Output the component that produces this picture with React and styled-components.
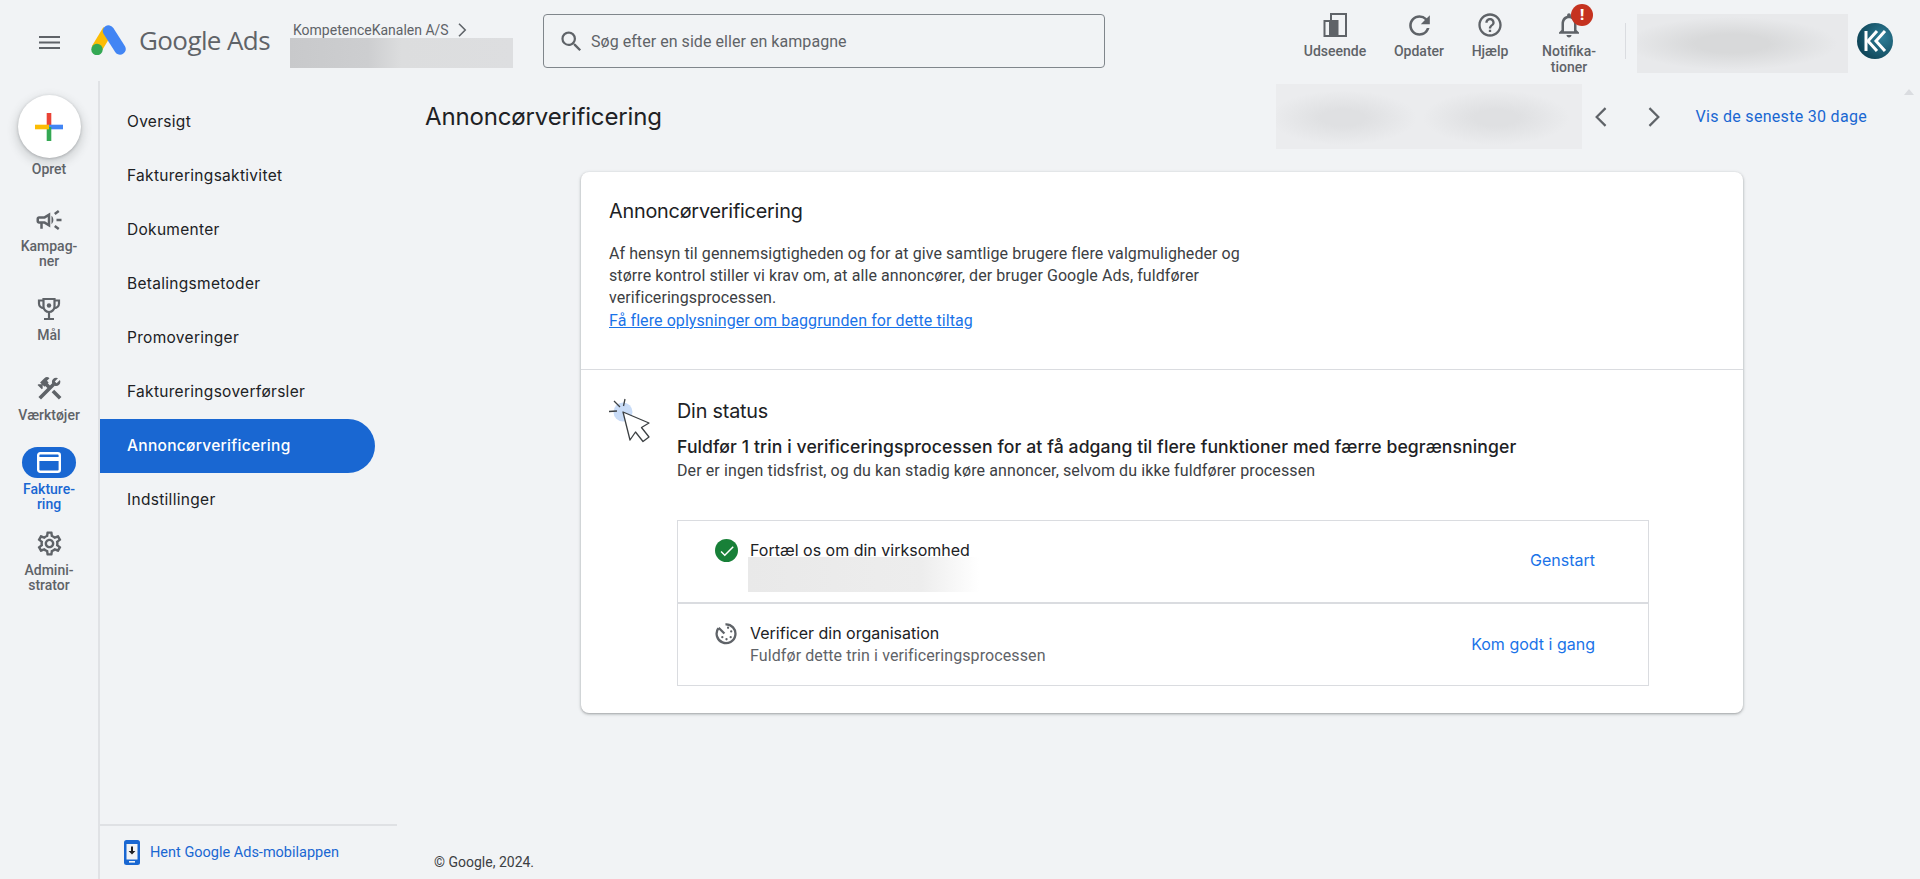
import React from 'react';
import styled, { createGlobalStyle } from 'styled-components';
import { MdRefresh, MdHelpOutline, MdOutlineNotifications, MdCheck, MdOutlineCampaign, MdConstruction, MdOutlineSettings, MdSearch } from 'react-icons/md';

const Global = createGlobalStyle`
  html, body { margin: 0; padding: 0; height: 100%; overflow: hidden; background: #f1f3f5; }
  body { font-family: Roboto, "Liberation Sans", sans-serif; color: #3c4043; }
  * { box-sizing: border-box; }
`;
const sans = `Inter, Roboto, sans-serif`;

const Page = styled.div`display:flex;flex-direction:column;width:1920px;height:879px;position:relative;overflow:hidden;`;
const Header = styled.header`display:flex;align-items:flex-start;height:81px;flex:none;`;
const Burger = styled.div`width:91px;height:81px;padding:34px 0 0 39px;flex:none;`;
const Brand = styled.div`display:flex;align-items:center;height:30px;margin-top:25px;gap:13px;flex:none;width:199px;`;
const BrandName = styled.span`font-family:"Open Sans",sans-serif;font-size:26px;color:#5f6368;letter-spacing:-0.6px;white-space:nowrap;line-height:30px;`;
const Account = styled.div`width:253px;flex:none;padding-top:21px;`;
const AccountName = styled.div`display:flex;align-items:center;height:18px;font-size:14px;color:#5f6368;padding-left:3px;gap:9px;white-space:nowrap;`;
const Blur = styled.div`flex:none;background:${p=>p.$bg};`;
const AccountBlur = styled(Blur)`width:223px;height:30px;margin-top:-1px;`;
const SearchBox = styled.div`width:562px;height:54px;margin-top:14px;flex:none;border:1px solid #80868b;border-radius:4px;display:flex;align-items:center;padding-left:14px;gap:6px;font-size:16px;letter-spacing:.05px;color:#5f6368;background:#f1f3f5;`;
const Tools = styled.div`display:flex;margin-left:auto;flex:none;`;
const Tool = styled.div`width:${p=>p.$w}px;flex:none;display:flex;flex-direction:column;align-items:center;padding-top:12px;font-size:14px;font-weight:500;color:#5f6368;line-height:16px;text-align:center;position:relative;`;
const ToolIcon = styled.div`height:26px;margin-bottom:5px;display:flex;align-items:center;justify-content:center;`;
const Badge = styled.span`position:absolute;left:48px;top:4px;width:22px;height:22px;border-radius:50%;background:#c5321f;color:#fff;font-size:15px;font-weight:900;line-height:22px;text-align:center;`;
const Divider = styled.div`width:1px;height:36px;background:#dadce0;margin:23px 11px 0 10px;flex:none;`;
const UserBlur = styled(Blur)`width:211px;height:59px;margin-top:14px;`;
const Avatar = styled.div`width:36px;height:36px;margin:23px 27px 0 9px;flex:none;border-radius:50%;background:radial-gradient(circle at 70% 40%, #2f7f99, #0f4558 75%);display:flex;align-items:center;justify-content:center;`;

const Body = styled.div`display:flex;flex:1;min-height:0;`;
const Rail = styled.nav`width:100px;flex:none;border-right:2px solid #e0e2e5;display:flex;flex-direction:column;align-items:center;`;
const CreateButton = styled.div`width:63px;height:63px;margin-top:14px;border-radius:50%;background:#fff;box-shadow:0 1px 3px rgba(60,64,67,.3),0 4px 8px 3px rgba(60,64,67,.15);display:flex;align-items:center;justify-content:center;flex:none;`;
const RailLabel = styled.div`font-size:14px;line-height:15px;font-weight:500;color:${p=>p.$active?'#1967d2':'#5f6368'};text-align:center;width:84px;`;
const CreateLabel = styled(RailLabel)`margin:4px 0 27px;`;
const RailItem = styled.div`height:${p=>p.$h}px;flex:none;display:flex;flex-direction:column;align-items:center;`;
const RailIcon = styled.div`width:54px;height:31px;display:flex;align-items:center;justify-content:center;margin-bottom:4px;color:#5f6368;border-radius:16px;background:${p=>p.$active?'#1967d2':'transparent'};`;

const SubNav = styled.nav`width:300px;flex:none;display:flex;flex-direction:column;`;
const SubList = styled.div`flex:1;padding-top:14px;`;
const SubItem = styled.div`width:275px;height:54px;padding:0 0 2px 27px;display:flex;align-items:center;font-family:${sans};font-size:15.5px;letter-spacing:.3px;font-weight:${p=>p.$active?500:400};color:${p=>p.$active?'#fff':'#202124'};background:${p=>p.$active?'#1967d2':'transparent'};border-radius:0 27px 27px 0;`;
const AppLink = styled.div`height:55px;margin-right:3px;border-top:2px solid #dfe1e4;display:flex;align-items:center;padding:0 0 0 24px;gap:10px;font-size:14.5px;color:#1967d2;`;

const Main = styled.main`flex:1;min-width:0;display:flex;flex-direction:column;position:relative;`;
const TitleBar = styled.div`height:65px;margin-top:3px;display:flex;align-items:center;padding-left:25px;flex:none;`;
const Title = styled.h1`margin:0;font-family:${sans};font-size:24px;font-weight:400;color:#202124;letter-spacing:-0.15px;`;
const DateBlur = styled(Blur)`width:306px;height:65px;margin-left:auto;`;
const NavArrow = styled.div`width:36px;display:flex;align-items:center;justify-content:center;flex:none;margin-left:${p=>p.$ml}px;`;
const RangeLink = styled.div`font-size:16px;letter-spacing:.3px;font-weight:400;color:#1967d2;margin:0 53px 0 22px;white-space:nowrap;`;
const ScrollUp = styled.div`position:absolute;right:6px;top:8px;width:0;height:0;border-left:5px solid transparent;border-right:5px solid transparent;border-bottom:6px solid #dadce0;`;

const Card = styled.section`width:1162px;margin:23px 0 0 181px;height:541px;flex:none;background:#fff;border-radius:8px;box-shadow:0 1px 2px rgba(60,64,67,.3),0 1px 3px 1px rgba(60,64,67,.15);display:flex;flex-direction:column;`;
const Intro = styled.div`height:198px;border-bottom:1px solid #dadce0;padding:26px 28px 0;flex:none;`;
const CardTitle = styled.h2`margin:0 0 19px;font-family:${sans};font-size:19.8px;line-height:26px;font-weight:400;color:#202124;letter-spacing:-0.2px;`;
const Para = styled.p`margin:0;font-size:16px;letter-spacing:.08px;line-height:22px;color:#3c4043;width:650px;`;
const LearnLink = styled.a`display:block;font-size:16px;letter-spacing:.08px;line-height:22px;margin-top:1px;color:#1a73e8;text-decoration:underline;`;
const Status = styled.div`display:flex;padding:27px 94px 0 28px;flex:1;`;
const StatusIcon = styled.div`width:68px;flex:none;margin-top:-1px;`;
const StatusBody = styled.div`flex:1;min-width:0;`;
const StatusTitle = styled.h3`margin:0;font-family:${sans};font-size:19.8px;line-height:28px;font-weight:400;color:#202124;letter-spacing:-0.2px;`;
const StatusLead = styled.div`font-family:${sans};font-size:17.6px;letter-spacing:.1px;line-height:24px;font-weight:500;color:#202124;margin-top:10px;white-space:nowrap;`;
const StatusNote = styled.div`font-size:16px;letter-spacing:.1px;line-height:22px;color:#3c4043;margin-top:1px;`;
const Steps = styled.div`margin-top:38px;border:1px solid #dadce0;`;
const Step = styled.div`height:${p=>p.$h}px;display:flex;padding:19px 53px 0 37px;${p=>p.$line?'border-bottom:2px solid #dadce0;':''}`;
const StepIcon = styled.div`width:35px;flex:none;margin-top:-1px;`;
const StepText = styled.div`flex:1;`;
const StepTitle = styled.div`font-family:${sans};font-size:16px;line-height:20px;font-weight:400;color:#202124;`;
const StepNote = styled.div`font-size:16px;letter-spacing:.1px;line-height:20px;color:#5f6368;margin-top:3px;`;
const StepBlur = styled(Blur)`width:231px;height:35px;margin:-3px 0 0 -2px;`;
const StepAction = styled.div`margin-top:${p=>p.$mt}px;line-height:20px;font-family:${sans};font-size:16px;font-weight:400;color:#1a73e8;white-space:nowrap;`;
const CheckDisc = styled.div`width:23px;height:23px;border-radius:50%;background:#188038;display:flex;align-items:center;justify-content:center;color:#fff;`;
const Copyright = styled.div`margin-top:auto;padding:0 0 8px 34px;font-size:14px;line-height:18px;color:#3c4043;`;

const blur1 = 'linear-gradient(90deg,#c8c9cb 0%,#cdced0 35%,#dcddde 50%,#dddee0 100%)';
const blur2 = 'radial-gradient(ellipse 50% 45% at 45% 50%,#d8d9da 35%,transparent),linear-gradient(#e8e9eb,#e8e9eb)';
const blur3 = 'radial-gradient(ellipse 24% 42% at 22% 52%,#dfe0e2 30%,transparent),radial-gradient(ellipse 24% 42% at 72% 52%,#dfe0e2 30%,transparent),linear-gradient(#ebecee,#ebecee)';
const blur4 = 'linear-gradient(90deg,#e9e9e9 0%,#ededed 75%,#fff 100%)';

const Logo = () => (
  <svg width="35" height="30" viewBox="0 0 35 30">
    <path d="M17 5 L5.5 24" stroke="#fbbc04" strokeWidth="11" strokeLinecap="butt" />
    <path d="M17.5 6 L29 24" stroke="#4285f4" strokeWidth="11.5" strokeLinecap="round" />
    <circle cx="6" cy="24.5" r="5.7" fill="#34a853" />
  </svg>
);
const Plus = () => (
  <svg width="28" height="28" viewBox="0 0 28 28">
    <rect x="11.7" y="0" width="4.6" height="14" fill="#ea4335" />
    <rect x="14" y="11.7" width="14" height="4.6" fill="#4285f4" />
    <rect x="11.7" y="14" width="4.6" height="14" fill="#34a853" />
    <rect x="0" y="11.7" width="14" height="4.6" fill="#fbbc04" />
  </svg>
);
const Appearance = () => (
  <svg width="24" height="24" viewBox="0 0 24 24">
    <rect x="8" y="1" width="15" height="22" fill="none" stroke="#5f6368" strokeWidth="2" />
    <rect x="1.5" y="8" width="13" height="15" fill="#f1f3f5" stroke="#5f6368" strokeWidth="2" />
    <rect x="6" y="9" width="9" height="14" fill="#5f6368" />
  </svg>
);
const Trophy = () => (
  <svg width="24" height="24" viewBox="0 0 24 24" fill="none" stroke="#5f6368" strokeWidth="2.2">
    <path d="M6.5 2H17.5V9.5A5.5 5.5 0 0 1 6.5 9.5Z" />
    <path d="M6.5 3.5H2V6.5C2 9 4 11 6.8 11.2M17.5 3.5H22V6.5C22 9 20 11 17.2 11.2" />
    <path d="M12 15V21M7 22H17" strokeWidth="2.2" />
    <circle cx="12" cy="8.5" r="2.2" fill="#5f6368" stroke="none" />
  </svg>
);
const Chevron = ({ left, size = 18 }) => (
  <svg width={size * 0.7} height={size} viewBox="0 0 12 18" fill="none" stroke="#5f6368" strokeWidth="2">
    <path d={left ? 'M11 1 L3 9 L11 17' : 'M1 1 L9 9 L1 17'} />
  </svg>
);
const CardIcon = () => (
  <svg width="24" height="21" viewBox="0 0 24 21">
    <rect x="1.2" y="1.2" width="21.6" height="18.6" rx="2" fill="none" stroke="#fff" strokeWidth="2.4" />
    <rect x="1" y="5" width="22" height="4" fill="#fff" />
  </svg>
);
const Phone = () => (
  <svg width="16" height="25" viewBox="0 0 16 25">
    <rect x="0" y="0" width="16" height="25" rx="2.5" fill="#1967d2" />
    <rect x="2.5" y="4" width="11" height="15.5" fill="#f1f3f5" />
    <rect x="5" y="21" width="6" height="1.6" fill="#f1f3f5" />
    <path d="M7 6.5h2v4.5h2.4L8 14.6 4.6 11H7z" fill="#202124" />
  </svg>
);
const Pending = () => (
  <svg width="23" height="23" viewBox="0 0 22 22" fill="none" stroke="#5f6368" strokeWidth="2.2">
    <path d="M10 2.2 A9 9 0 1 1 3.2 6" />
    <path d="M3.5 5.5 L9 11" />
    <circle cx="7" cy="14.5" r="1.1" fill="#5f6368" stroke="none" />
    <circle cx="11" cy="16.5" r="1.1" fill="#5f6368" stroke="none" />
    <circle cx="15" cy="14.5" r="1.1" fill="#5f6368" stroke="none" />
    <circle cx="15.5" cy="9" r="1.1" fill="#5f6368" stroke="none" />
    <circle cx="12.5" cy="5.5" r="1.1" fill="#5f6368" stroke="none" />
  </svg>
);
const Cursor = () => (
  <svg width="46" height="50" viewBox="0 0 46 50" fill="none">
    <circle cx="14" cy="16" r="9.5" fill="#c9dcf7" />
    <path d="M14 16 L21 44 L26.5 36 L34 45.5 L40 41 L32.5 31.5 L40 27 Z" fill="#fff" stroke="#3c4043" strokeWidth="1.3" strokeLinejoin="round" />
    <path d="M5 5 L11 11 M16 3 L14.5 10 M0 15.5 L8 15" stroke="#3c4043" strokeWidth="1.3" />
  </svg>
);
const KK = () => (
  <svg width="24" height="22" viewBox="0 0 24 22" fill="none" stroke="#fff" strokeWidth="3">
    <path d="M3 1 V21" />
    <path d="M14 1 L5 11 L14 21" />
    <path d="M22 1 L13 11 L22 21" />
  </svg>
);

const subItems = ['Oversigt','Faktureringsaktivitet','Dokumenter','Betalingsmetoder','Promoveringer','Faktureringsoverførsler','Annoncørverificering','Indstillinger'];

export default function App() {
  return (
    <Page>
      <Global />
      <Header>
        <Burger>
          <svg width="21" height="13" viewBox="0 0 21 13" fill="#5f6368"><rect width="21" height="2"/><rect y="5.5" width="21" height="2"/><rect y="11" width="21" height="2"/></svg>
        </Burger>
        <Brand><Logo /><BrandName>Google Ads</BrandName></Brand>
        <Account>
          <AccountName>KompetenceKanalen A/S <Chevron size={14} /></AccountName>
          <AccountBlur $bg={blur1} />
        </Account>
        <SearchBox><MdSearch size={27} color="#5f6368" />Søg efter en side eller en kampagne</SearchBox>
        <Tools>
          <Tool $w={92}><ToolIcon><Appearance /></ToolIcon>Udseende</Tool>
          <Tool $w={76}><ToolIcon><MdRefresh size={31} color="#5f6368" /></ToolIcon>Opdater</Tool>
          <Tool $w={66}><ToolIcon><MdHelpOutline size={28} color="#5f6368" /></ToolIcon>Hjælp</Tool>
          <Tool $w={92}>
            <ToolIcon><MdOutlineNotifications size={30} color="#5f6368" /></ToolIcon>Notifika-<br />tioner
            <Badge>!</Badge>
          </Tool>
          <Divider />
          <UserBlur $bg={blur2} />
          <Avatar><KK /></Avatar>
        </Tools>
      </Header>
      <Body>
        <Rail>
          <CreateButton><Plus /></CreateButton>
          <CreateLabel>Opret</CreateLabel>
          <RailItem $h={89}><RailIcon><MdOutlineCampaign size={30} /></RailIcon><RailLabel>Kampag-<br />ner</RailLabel></RailItem>
          <RailItem $h={80}><RailIcon><Trophy /></RailIcon><RailLabel>Mål</RailLabel></RailItem>
          <RailItem $h={74}><RailIcon><MdConstruction size={29} /></RailIcon><RailLabel>Værktøjer</RailLabel></RailItem>
          <RailItem $h={81}><RailIcon $active><CardIcon /></RailIcon><RailLabel $active>Fakture-<br />ring</RailLabel></RailItem>
          <RailItem $h={81}><RailIcon><MdOutlineSettings size={29} /></RailIcon><RailLabel>Admini-<br />strator</RailLabel></RailItem>
        </Rail>
        <SubNav>
          <SubList>
            {subItems.map((t) => <SubItem key={t} $active={t === 'Annoncørverificering'}>{t}</SubItem>)}
          </SubList>
          <AppLink><Phone />Hent Google Ads-mobilappen</AppLink>
        </SubNav>
        <Main>
          <ScrollUp />
          <TitleBar>
            <Title>Annoncørverificering</Title>
            <DateBlur $bg={blur3} />
            <NavArrow $ml={0}><Chevron left size={20} /></NavArrow>
            <NavArrow $ml={19}><Chevron size={20} /></NavArrow>
            <RangeLink>Vis de seneste 30 dage</RangeLink>
          </TitleBar>
          <Card>
            <Intro>
              <CardTitle>Annoncørverificering</CardTitle>
              <Para>Af hensyn til gennemsigtigheden og for at give samtlige brugere flere valgmuligheder og større kontrol stiller vi krav om, at alle annoncører, der bruger Google Ads, fuldfører verificeringsprocessen.</Para>
              <LearnLink>Få flere oplysninger om baggrunden for dette tiltag</LearnLink>
            </Intro>
            <Status>
              <StatusIcon><Cursor /></StatusIcon>
              <StatusBody>
                <StatusTitle>Din status</StatusTitle>
                <StatusLead>Fuldfør 1 trin i verificeringsprocessen for at få adgang til flere funktioner med færre begrænsninger</StatusLead>
                <StatusNote>Der er ingen tidsfrist, og du kan stadig køre annoncer, selvom du ikke fuldfører processen</StatusNote>
                <Steps>
                  <Step $h={83} $line>
                    <StepIcon><CheckDisc><MdCheck size={18} /></CheckDisc></StepIcon>
                    <StepText><StepTitle>Fortæl os om din virksomhed</StepTitle><StepBlur $bg={blur4} /></StepText>
                    <StepAction $mt={10}>Genstart</StepAction>
                  </Step>
                  <Step $h={81}>
                    <StepIcon><Pending /></StepIcon>
                    <StepText><StepTitle>Verificer din organisation</StepTitle><StepNote>Fuldfør dette trin i verificeringsprocessen</StepNote></StepText>
                    <StepAction $mt={11}>Kom godt i gang</StepAction>
                  </Step>
                </Steps>
              </StatusBody>
            </Status>
          </Card>
          <Copyright>© Google, 2024.</Copyright>
        </Main>
      </Body>
    </Page>
  );
}
